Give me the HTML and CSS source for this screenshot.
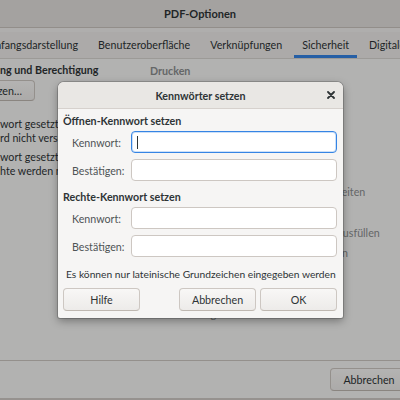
FILE: index.html
```html
<!DOCTYPE html>
<html lang="de">
<head>
<meta charset="utf-8">
<title>PDF-Optionen</title>
<link rel="stylesheet" href="styles.css">
</head>
<body>
<div class="window">
  <header class="titlebar"><span class="title">PDF-Optionen</span></header>
  <nav class="tabbar">
    <div class="tabs">
      <span class="tab">Anfangsdarstellung</span>
      <span class="tab">Benutzeroberfläche</span>
      <span class="tab">Verknüpfungen</span>
      <span class="tab active">Sicherheit</span>
      <span class="tab">Digitale Signaturen</span>
    </div>
  </nav>
  <main class="content">
    <section class="col-left">
      <div class="heading">ng und Berechtigung</div>
      <div class="btnrow"><button class="btn setbtn">Kennwörter setzen…</button></div>
      <div class="info first">
        <p>wort gesetzt</p>
        <p>rd nicht verschlüsselt</p>
      </div>
      <div class="info second">
        <p>wort gesetzt</p>
        <p>hte werden nicht eingeschränkt</p>
      </div>
    </section>
    <section class="col-right">
      <div class="heading dis">Drucken</div>
      <div class="opt">Nicht erlaubt</div>
      <div class="opt">Niedrige Auflösung</div>
      <div class="opt">Hohe Auflösung</div>
      <div class="heading dis">Änderungen</div>
      <div class="opt">Nicht erlaubt</div>
      <div class="opt o1">Einfügen, Löschen und Drehen von Seiten</div>
      <div class="opt">Formularfelder ausfüllen</div>
      <div class="opt o2">Kommentieren und Formularfelder ausfüllen</div>
      <div class="opt o3">Alles außer Herauslösen von Seiten</div>
      <div class="heading dis">Inhalt</div>
      <div class="opt">Kopieren von Inhalten</div>
      <div class="opt o4">Textzugriff für Hilfsmittel zulassen</div>
    </section>
  </main>
  <footer class="actions">
    <button class="btn wide">Abbrechen</button>
    <button class="btn wide">OK</button>
  </footer>
</div>
<div class="backdrop"></div>

<div class="dialog">
  <div class="dlg-head">
    <span class="dlg-title">Kennwörter setzen</span>
    <span class="close"><svg width="8" height="8" viewBox="0 0 8 8"><path d="M1 1L7 7M7 1L1 7" stroke="#2e3436" stroke-width="1.8" stroke-linecap="round"/></svg></span>
  </div>
  <div class="dlg-body">
    <div class="sec-title">Öffnen-Kennwort setzen</div>
    <div class="form">
      <label class="lbl">Kennwort:</label>
      <div class="field focus"><span class="caret"></span></div>
      <label class="lbl">Bestätigen:</label>
      <div class="field"></div>
    </div>
    <div class="sec-title second">Rechte-Kennwort setzen</div>
    <div class="form">
      <label class="lbl">Kennwort:</label>
      <div class="field"></div>
      <label class="lbl">Bestätigen:</label>
      <div class="field"></div>
    </div>
    <div class="note">Es können nur lateinische Grundzeichen eingegeben werden</div>
    <div class="dlg-buttons">
      <button class="btn db">Hilfe</button>
      <span class="grow"></span>
      <button class="btn db">Abbrechen</button>
      <button class="btn db">OK</button>
    </div>
  </div>
</div>
</body>
</html>
```
FILE: styles.css
```css
* { box-sizing: border-box; }
html, body { margin: 0; padding: 0; }
body {
  width: 400px;
  height: 400px;
  overflow: hidden;
  position: relative;
  font-family: Lato, "Noto Sans", sans-serif;
  font-size: 10.7px;
  color: #2e3436;
  background: #f6f5f4;
}
p { margin: 0; }
button { font: inherit; color: inherit; }

.window {
  display: flex;
  flex-direction: column;
  height: 400px;
  border-bottom: 2px solid #cfcac5;
}
.titlebar {
  height: 28px;
  flex: none;
  display: flex;
  align-items: center;
  justify-content: center;
  background: #e3e0dd;
  border-bottom: 1px solid #c9c4bf;
}
.title { font-weight: 700; font-size: 11px; }

.tabbar {
  flex: none;
  padding-top: 4px;
  background: #f2f0ef;
}
.tabs {
  height: 27px;
  display: flex;
  align-items: stretch;
  gap: 4px;
  margin-left: -20px;
  background: #edebe9;
  border-bottom: 1px solid #d8d4d0;
  white-space: nowrap;
}
.tab {
  padding: 0 8px;
  display: flex;
  align-items: center;
  border-bottom: 3px solid transparent;
  padding-top: 2px;
}
.tab.active { border-bottom-color: #3584e4; }

.content {
  flex: 1;
  display: flex;
  padding-top: 4px;
  overflow: hidden;
}
.col-left {
  width: 150px;
  flex: none;
  white-space: nowrap;
}
.col-right { white-space: nowrap; margin-top: -2.5px; }
.heading { font-weight: 700; line-height: 14px; }
.btnrow { margin-top: 3px; margin-left: -30px; }
.btn {
  display: flex;
  align-items: center;
  justify-content: center;
  height: 23px;
  padding: 0 12px;
  background: linear-gradient(#f8f7f6, #edebe9);
  border: 1px solid #cdc7c2;
  border-bottom-color: #bfb8b1;
  border-radius: 4px;
  white-space: nowrap;
}
.setbtn { height: 21px; width: 65px; justify-content: flex-end; overflow: hidden; }
.info { line-height: 14px; }
.info.first { margin-top: 16px; }
.info.second { margin-top: 5px; }

.col-right .heading.dis { color: #8b8e8f; line-height: 20.3px; }
.opt {
  color: #8b8e8f;
  line-height: 20.3px;
  padding-left: 18px;
}
.opt.o1 { padding-left: 20px; }
.opt.o2 { padding-left: 23px; }
.opt.o3 { padding-left: 33px; }
.opt.o4 { padding-left: 30px; }

.actions {
  flex: none;
  height: 38px;
  border-top: 1px solid #cdc7c2;
  display: flex;
  align-items: center;
  gap: 6px;
  padding-left: 330px;
}
.wide { width: 78px; flex: none; }

.backdrop {
  position: absolute;
  inset: 0;
  background: rgba(0, 0, 0, 0.275);
}

.dialog {
  position: absolute;
  left: 58px;
  top: 82px;
  width: 285px;
  height: 236px;
  background: #f6f5f4;
  border-radius: 6px 6px 2px 2px;
  box-shadow: 0 0 0 1px rgba(0,0,0,0.18), 0 3px 9px rgba(0,0,0,0.35);
  overflow: hidden;
  display: flex;
  flex-direction: column;
}
.dlg-head {
  height: 27px;
  flex: none;
  position: relative;
  display: flex;
  align-items: center;
  justify-content: center;
  background: #e9e7e4;
  border-bottom: 1px solid #d6d1cd;
}
.dlg-title { font-weight: 700; }
.close {
  position: absolute;
  right: 8px;
  top: 9px;
  width: 8px;
  height: 8px;
  display: flex;
}
.dlg-body {
  padding: 5px 6px 6px 5px;
  display: flex;
  flex-direction: column;
  flex: 1;
}
.sec-title { font-weight: 700; line-height: 14px; }
.sec-title.second { margin-top: 9px; }
.form {
  margin-top: 3px;
  display: grid;
  grid-template-columns: 68px 1fr;
  row-gap: 6px;
  align-items: center;
}
.lbl { color: #4f5456; padding-left: 9px; }
.field {
  height: 22px;
  background: #fff;
  border: 1px solid #cdc7c2;
  border-radius: 4px;
  display: flex;
  align-items: center;
  padding-left: 5px;
}
.field.focus {
  border-color: #3584e4;
  box-shadow: inset 0 0 0 1px rgba(53,132,228,0.25);
}
.caret { width: 1px; height: 13px; background: #2e3436; }
.note {
  margin-top: 10px;
  line-height: 14px;
  padding-left: 3px;
  font-size: 10.25px;
  white-space: nowrap;
}
.dlg-buttons {
  margin-top: 7px;
  display: flex;
  gap: 4px;
}
.grow { flex: 1; }
.db { width: 77px; }
```
